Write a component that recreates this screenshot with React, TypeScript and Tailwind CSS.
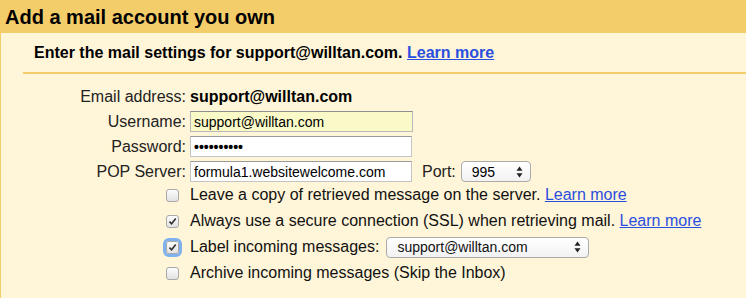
import React from "react";

function Checkbox({ checked, focused }: { checked?: boolean; focused?: boolean }) {
  return (
    <span
      className={
        "relative flex h-[13px] w-[13px] shrink-0 items-center justify-center rounded-[3px] border border-[#a8a8a8] bg-gradient-to-b from-[#fdfdfd] to-[#e2e2e2] " +
        (focused ? "ring-[3px] ring-[#7fb1ef]" : "")
      }
    >
      {checked && (
        <svg width="9" height="9" viewBox="0 0 10 10">
          <path d="M1.6 5.2 L4 7.6 L8.6 1.8" fill="none" stroke="#333" strokeWidth="1.8" />
        </svg>
      )}
    </span>
  );
}

function SelectArrows() {
  return (
    <svg width="7" height="12" viewBox="0 0 7 12">
      <path d="M3.5 0.5 L6.5 4.8 L0.5 4.8 Z" fill="#222" />
      <path d="M3.5 11.5 L6.5 7.2 L0.5 7.2 Z" fill="#222" />
    </svg>
  );
}

export default function App() {
  const font = { fontFamily: '"Liberation Sans", Arial, sans-serif' };
  return (
    <div className="h-[298px] w-[746px] overflow-hidden bg-[#fff5d8] text-black" style={font}>
      <div className="flex h-[33px] items-center bg-[#f4cd6b] pl-[5px]">
        <h1 className="text-[20px] font-bold leading-none">Add a mail account you own</h1>
      </div>
      <div className="border-l border-[#f4cd6b] h-[265px]">
        <div className="flex h-[39px] items-center pl-[33px] pt-[1px] text-[16px] font-bold leading-none">
          Enter the mail settings for support@willtan.com.&nbsp;
          <a className="text-[#2a4ee0] underline">Learn more</a>
        </div>
        <div className="ml-[22px] h-[2px] bg-[#f4cd6b]" />
        <div className="grid grid-cols-[185px_auto] items-center gap-x-[4px] text-[16px] leading-none">
          <div className="col-span-2 h-[10px]" />
          <div className="flex h-[25px] items-center justify-end text-[#222]">Email address:</div>
          <div className="flex h-[25px] items-center font-bold">support@willtan.com</div>

          <div className="flex h-[25px] items-center justify-end text-[#222]">Username:</div>
          <div className="flex h-[25px] items-center">
            <div className="flex h-[21px] w-[223px] items-center border border-[#b9b9b9] border-t-[#8e8e8e] bg-[#fafac8] pl-[3px] text-[14px]">
              support@willtan.com
            </div>
          </div>

          <div className="flex h-[25px] items-center justify-end text-[#222]">Password:</div>
          <div className="flex h-[25px] items-center">
            <div className="flex h-[21px] w-[222px] items-center border border-[#c4c4c4] border-t-[#9a9a9a] bg-white pl-[3px] text-[14px] font-bold">
              ••••••••••
            </div>
          </div>

          <div className="flex h-[25px] items-center justify-end text-[#222]">POP Server:</div>
          <div className="flex h-[25px] items-center">
            <div className="flex h-[21px] w-[222px] items-center border border-[#c4c4c4] border-t-[#9a9a9a] bg-white pl-[3px] text-[14px]">
              formula1.websitewelcome.com
            </div>
            <span className="ml-[10px] text-[#222]">Port:</span>
            <div className="ml-[5px] flex h-[21px] w-[70px] items-center justify-between rounded-[4px] border border-[#aaa] bg-gradient-to-b from-white to-[#f2f2f2] pl-[10px] pr-[7px] text-[14px]">
              995
              <SelectArrows />
            </div>
          </div>
        </div>
        <div className="-mt-[2px] flex flex-col pl-[165px] text-[16px] leading-none text-[#111]">
          <div className="flex h-[26px] items-center gap-[11px]">
            <Checkbox />
            <span>
              Leave a copy of retrieved message on the server.{" "}
              <a className="text-[#2a4ee0] underline">Learn more</a>
            </span>
          </div>
          <div className="flex h-[26px] items-center gap-[11px]">
            <Checkbox checked />
            <span>
              Always use a secure connection (SSL) when retrieving mail.{" "}
              <a className="text-[#2a4ee0] underline">Learn more</a>
            </span>
          </div>
          <div className="flex h-[26px] items-center gap-[11px]">
            <Checkbox checked focused />
            <span>Label incoming messages:</span>
            <div className="-ml-[4px] flex h-[21px] w-[203px] items-center justify-between rounded-[4px] border border-[#aaa] bg-gradient-to-b from-white to-[#f2f2f2] pl-[10px] pr-[7px] text-[14px]">
              support@willtan.com
              <SelectArrows />
            </div>
          </div>
          <div className="flex h-[26px] items-center gap-[11px]">
            <Checkbox />
            <span>Archive incoming messages (Skip the Inbox)</span>
          </div>
        </div>
      </div>
    </div>
  );
}
